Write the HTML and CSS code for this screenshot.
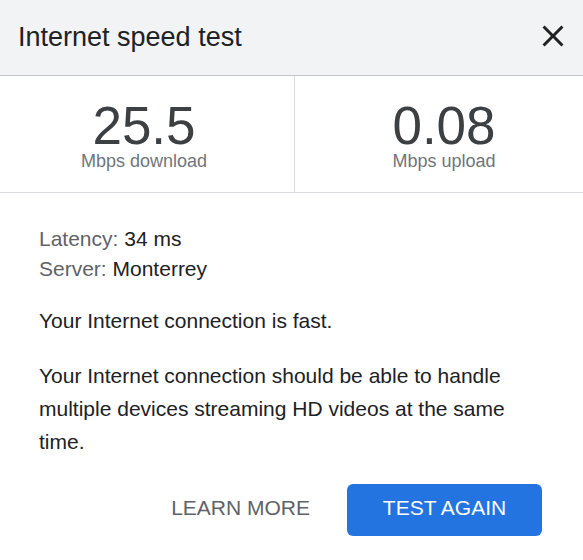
FILE: index.html
```html
<!DOCTYPE html>
<html lang="en">
<head>
<meta charset="utf-8">
<title>Internet speed test</title>
<link rel="stylesheet" href="styles.css">
</head>
<body>
<div class="dialog">
  <header class="header">
    <h1 class="title">Internet speed test</h1>
    <button class="close" aria-label="Close">
      <svg viewBox="0 0 24 24" width="36" height="36"><path d="M19 6.41L17.59 5 12 10.59 6.41 5 5 6.41 10.59 12 5 17.59 6.41 19 12 13.41 17.59 19 19 17.59 13.41 12z" fill="#202124"/></svg>
    </button>
  </header>
  <section class="stats">
    <div class="stat stat-down">
      <div class="value">25.5</div>
      <div class="unit">Mbps download</div>
    </div>
    <div class="stat stat-up">
      <div class="value">0.08</div>
      <div class="unit">Mbps upload</div>
    </div>
  </section>
  <section class="body">
    <div class="meta">
      <div><span class="label">Latency:</span> 34 ms</div>
      <div><span class="label">Server:</span> Monterrey</div>
    </div>
    <p class="para">Your Internet connection is fast.</p>
    <p class="para">Your Internet connection should be able to handle multiple devices streaming HD videos at the same time.</p>
    <div class="actions">
      <button class="btn btn-text">LEARN MORE</button>
      <button class="btn btn-primary">TEST AGAIN</button>
    </div>
  </section>
</div>
</body>
</html>
```

FILE: styles.css
```css
* { box-sizing: border-box; }
html, body { margin: 0; padding: 0; background: #ffffff; }
body { font-family: "Liberation Sans", Arial, sans-serif; color: #202124; }

.dialog { width: 583px; }

.header {
  height: 76px;
  background: #f1f3f4;
  border-bottom: 1px solid #c6c6c6;
  display: flex;
  align-items: center;
  justify-content: space-between;
  padding: 0 0 1px 18px;
}
.title {
  margin: 0;
  font-size: 27px;
  font-weight: normal;
  color: #202124;
}
.close {
  border: 0;
  background: none;
  padding: 0;
  width: 36px;
  height: 36px;
  margin-right: 12px;
  margin-top: -3px;
  display: flex;
}

.stats {
  display: grid;
  grid-template-columns: 295px 1fr;
  height: 117px;
  border-bottom: 1px solid #dadce0;
}
.stat {
  display: flex;
  flex-direction: column;
  align-items: center;
  padding-top: 27px;
}
.stat-down { border-right: 1px solid #dadce0; padding-right: 6px; }
.stat-up { padding-left: 10px; }
.value {
  font-size: 53px;
  line-height: 46px;
  color: #3c4043;
}
.unit {
  margin-top: 1px;
  font-size: 18px;
  line-height: 22px;
  color: #70757a;
}

.body {
  padding: 31px 41px 0 39px;
  font-size: 21px;
}
.meta { line-height: 30px; color: #202124; }
.label { color: #5f6368; }
.para {
  margin: 20px 0 0;
  line-height: 33px;
  color: #202124;
}
.para + .para { margin-top: 22px; }

.actions {
  display: flex;
  justify-content: flex-end;
  gap: 2px;
  margin-top: 26px;
}
.btn {
  font-family: "Liberation Sans", Arial, sans-serif;
  font-size: 21px;
  height: 52px;
  padding: 0 35px 4px;
  border: 0;
  border-radius: 6px;
  background: none;
  display: flex;
  align-items: center;
}
.btn-text { color: #5f6368; }
.btn-primary {
  background: #2374e1;
  color: #ffffff;
  width: 195px;
  justify-content: center;
}
```
